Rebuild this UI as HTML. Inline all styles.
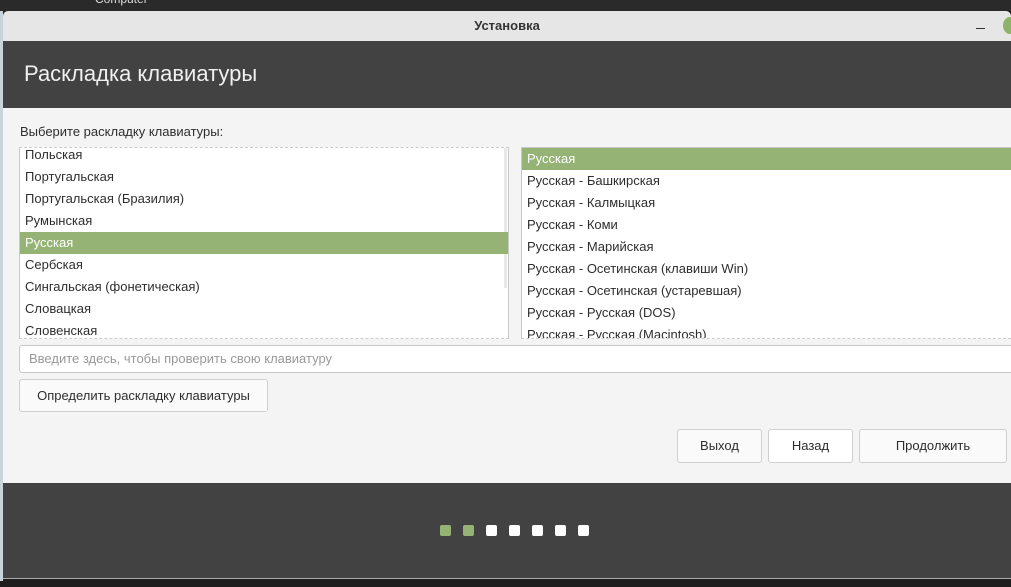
<!DOCTYPE html>
<html><head><meta charset="utf-8"><style>
*{margin:0;padding:0;box-sizing:border-box}
body{width:1011px;height:587px;overflow:hidden;background:#1e1e1e;font-family:"Liberation Sans","DejaVu Sans",sans-serif;position:relative;font-size:13px;color:#2e2e2e}
.a{position:absolute}
.list{background:#fff;border:1px solid #c8c8c8;overflow:hidden}
.row{height:22px;line-height:22px;padding-left:5px;white-space:nowrap;position:relative}
.sel{background:#94b374;color:#fff}
.btn{background:#fafafa;border:1px solid #cfcfcf;border-radius:3px;text-align:center;font-size:13px;color:#2e2e2e}
.dot{width:11px;height:11px;border-radius:2px;background:#fff;top:525px}
</style></head><body>
<div class="a" style="left:0;top:0;width:1011px;height:11px;background:#2a2a2a"></div>
<div class="a" style="left:95px;top:-8px;color:#ddd;font-size:12px">Computer</div>
<div class="a" style="left:0;top:11px;width:3px;height:570px;background:#c9d3dc"></div>
<div class="a" style="left:3px;top:11px;width:1008px;height:30px;background:#e6e6e6;border-radius:5px 5px 0 0;text-align:center;line-height:30px;font-size:13px;color:#333;font-weight:bold">Установка</div>
<div class="a" style="left:976px;top:28px;width:9px;height:1px;background:#333"></div>
<div class="a" style="left:1003px;top:17px;width:14px;height:17px;border-radius:50%;background:#8db36b"></div>
<div class="a" style="left:3px;top:41px;width:1008px;height:67px;background:#424242"></div>
<div class="a" style="left:24px;top:61px;font-size:22px;color:#f0f0f0">Раскладка клавиатуры</div>
<div class="a" style="left:3px;top:108px;width:1008px;height:375px;background:#f4f4f4"></div>
<div class="a" style="left:20px;top:124px;font-size:13px">Выберите раскладку клавиатуры:</div>
<div class="a list" style="left:19px;top:147px;width:490px;height:192px;border-top:1px dashed #ccc;border-bottom:1px dashed #ccc">
<div class="a" style="left:484px;top:0;width:3px;height:140px;background:#e8e8e8"></div>
<div style="margin-top:-4px">
<div class="row">Польская</div><div class="row">Португальская</div><div class="row">Португальская (Бразилия)</div><div class="row">Румынская</div><div class="row sel">Русская</div><div class="row">Сербская</div><div class="row">Сингальская (фонетическая)</div><div class="row">Словацкая</div><div class="row">Словенская</div></div>
</div>
<div class="a list" style="left:521px;top:147px;width:495px;height:192px;border-bottom:1px dashed #ccc">
<div class="row sel">Русская</div><div class="row">Русская - Башкирская</div><div class="row">Русская - Калмыцкая</div><div class="row">Русская - Коми</div><div class="row">Русская - Марийская</div><div class="row">Русская - Осетинская (клавиши Win)</div><div class="row">Русская - Осетинская (устаревшая)</div><div class="row">Русская - Русская (DOS)</div><div class="row">Русская - Русская (Macintosh)</div>
</div>
<div class="a" style="left:19px;top:345px;width:1000px;height:28px;background:#fff;border:1px solid #c8c8c8;border-radius:3px;line-height:26px;padding-left:9px;color:#999">Введите здесь, чтобы проверить свою клавиатуру</div>
<div class="a btn" style="left:19px;top:379px;width:249px;height:33px;line-height:31px">Определить раскладку клавиатуры</div>
<div class="a btn" style="left:677px;top:429px;width:85px;height:34px;line-height:32px">Выход</div>
<div class="a btn" style="left:768px;top:429px;width:85px;height:34px;line-height:32px;background:#fff">Назад</div>
<div class="a btn" style="left:859px;top:429px;width:148px;height:34px;line-height:32px">Продолжить</div>
<div class="a" style="left:3px;top:483px;width:1008px;height:96px;background:#424242;border-bottom:1px solid #aaa"></div>
<div class="a dot" style="left:440px;background:#94b374"></div>
<div class="a dot" style="left:463px;background:#94b374"></div>
<div class="a dot" style="left:486px"></div>
<div class="a dot" style="left:509px"></div>
<div class="a dot" style="left:532px"></div>
<div class="a dot" style="left:555px"></div>
<div class="a dot" style="left:578px"></div>
</body></html>
